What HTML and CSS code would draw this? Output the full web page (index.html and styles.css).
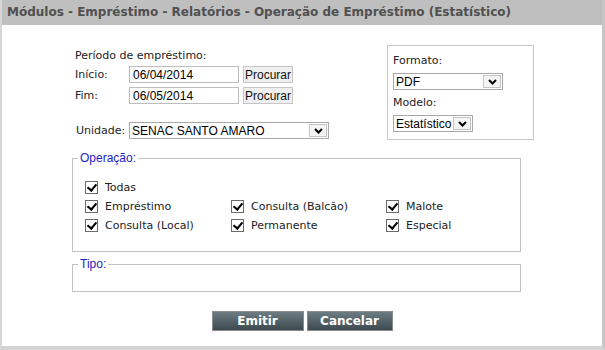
FILE: index.html
```html
<!DOCTYPE html>
<html lang="pt-BR">
  <head>
    <meta charset="UTF-8" />
    <meta name="viewport" content="width=device-width, initial-scale=1.0" />
    <title>Operação de Empréstimo (Estatístico)</title>
    <link rel="stylesheet" href="styles.css">
  </head>
  <body>
    <div class="panel">
      <div class="panel-title">
        Módulos - Empréstimo - Relatórios - Operação de Empréstimo (Estatístico)
      </div>

      <form class="report-form">
        <div class="top-row">
          <div class="period">
            <p class="caption">Período de empréstimo:</p>
            <div class="field">
              <label for="inicio">Início:</label>
              <input type="text" id="inicio" class="date" value="06/04/2014" />
              <button type="button" class="btn-search">Procurar</button>
            </div>
            <div class="field">
              <label for="fim">Fim:</label>
              <input type="text" id="fim" class="date" value="06/05/2014" />
              <button type="button" class="btn-search">Procurar</button>
            </div>
            <div class="field unit">
              <label for="unidade">Unidade:</label>
              <span class="select select-unit">
                <select id="unidade">
                  <option>SENAC SANTO AMARO</option>
                </select>
                <span class="arrow">
                  <svg width="9" height="6" viewBox="0 0 9 6"><polyline points="1,1 4.5,4.5 8,1" fill="none" stroke="#000" stroke-width="2" /></svg>
                </span>
              </span>
            </div>
          </div>

          <div class="format-box">
            <p class="caption">Formato:</p>
            <span class="select select-format">
              <select>
                <option>PDF</option>
              </select>
              <span class="arrow">
                <svg width="9" height="6" viewBox="0 0 9 6"><polyline points="1,1 4.5,4.5 8,1" fill="none" stroke="#000" stroke-width="2" /></svg>
              </span>
            </span>
            <p class="caption">Modelo:</p>
            <span class="select select-model">
              <select>
                <option>Estatístico</option>
              </select>
              <span class="arrow">
                <svg width="9" height="6" viewBox="0 0 9 6"><polyline points="1,1 4.5,4.5 8,1" fill="none" stroke="#000" stroke-width="2" /></svg>
              </span>
            </span>
          </div>
        </div>

        <fieldset class="group group-ops">
          <legend>Operação:</legend>
          <div class="checks">
            <label class="check all"><input type="checkbox" checked /> Todas</label>
            <label class="check"><input type="checkbox" checked /> Empréstimo</label>
            <label class="check"><input type="checkbox" checked /> Consulta (Balcão)</label>
            <label class="check"><input type="checkbox" checked /> Malote</label>
            <label class="check"><input type="checkbox" checked /> Consulta (Local)</label>
            <label class="check"><input type="checkbox" checked /> Permanente</label>
            <label class="check"><input type="checkbox" checked /> Especial</label>
          </div>
        </fieldset>

        <fieldset class="group group-type">
          <legend>Tipo:</legend>
        </fieldset>

        <div class="actions">
          <button type="button" class="btn btn-emit">Emitir</button>
          <button type="button" class="btn btn-cancel">Cancelar</button>
        </div>
      </form>
    </div>
  </body>
</html>
```

FILE: styles.css
```css
* {
  margin: 0;
  padding: 0;
  box-sizing: border-box;
}

body {
  font-family: "DejaVu Sans", Verdana, sans-serif;
  font-size: 11px;
  color: #222;
  background: #fff;
}

.panel {
  width: 605px;
  height: 350px;
  border-left: 2px solid #d6d6d6;
  border-right: 3px solid #c6c6c6;
  border-bottom: 4px solid #d4d4d4;
  background: #fff;
}

.panel-title {
  height: 25px;
  line-height: 25px;
  padding-left: 5px;
  background: #bfbfbf;
  color: #505050;
  font-weight: bold;
  font-size: 12px;
  white-space: nowrap;
}

/* Top area */
.top-row {
  display: flex;
  align-items: flex-start;
  padding: 20px 0 0 73px;
}

.period {
  width: 310px;
  padding-top: 4px;
}

.caption {
  line-height: 14px;
}

.period .caption {
  margin-bottom: 3px;
}

.field {
  display: flex;
  align-items: center;
  height: 17px;
  margin-bottom: 4px;
}

.field label {
  width: 54px;
}

.field.unit {
  margin-top: 18px;
}

.field.unit label {
  padding-left: 1px;
}

.date {
  width: 110px;
  height: 17px;
  border: 1px solid #bdbdbd;
  padding: 0 3px;
  font-family: "Liberation Sans", Arial, sans-serif;
  font-size: 12px;
  color: #000;
  outline: none;
}

.btn-search {
  width: 50px;
  height: 17px;
  margin-left: 4px;
  border: 1px solid #c6c6c6;
  background: #efefef;
  font-family: "Liberation Sans", Arial, sans-serif;
  font-size: 12px;
  color: #111;
  cursor: pointer;
}

/* Fake classic select */
.select {
  display: inline-flex;
  align-items: stretch;
  height: 17px;
  border: 1px solid #a9a9a9;
  background: #fff;
}

.select select {
  flex: 1;
  min-width: 0;
  appearance: none;
  border: none;
  outline: none;
  background: transparent;
  padding-left: 2px;
  font-family: "Liberation Sans", Arial, sans-serif;
  font-size: 12px;
  color: #000;
}

.select .arrow {
  display: flex;
  align-items: center;
  justify-content: center;
  width: 18px;
  margin: 1px;
  border: 1px solid #c4c4c4;
  background: #f4f4f4;
}

.select-unit {
  width: 200px;
}

.select-format {
  width: 110px;
}

.select-model {
  width: 80px;
}

.format-box {
  width: 147px;
  margin-left: 2px;
  border: 1px solid #c8c8c8;
  padding: 8px 5px 7px;
}

.format-box .caption {
  margin-bottom: 5px;
}

.format-box .select {
  display: flex;
}

.format-box .select-format {
  margin-bottom: 6px;
}

/* Groups */
.group {
  width: 449px;
  margin-left: 70px;
  border: 1px solid #c2c2c2;
}

.group legend {
  margin-left: 5px;
  padding: 0 2px;
  line-height: 14px;
  font-family: "Liberation Sans", Arial, sans-serif;
  font-size: 12px;
  color: #1c1cc4;
}

.group-ops {
  margin-top: 8px;
  padding: 13px 0 16px;
}

.checks {
  display: grid;
  grid-template-columns: 146px 155px 1fr;
  grid-auto-rows: 19px;
  padding-left: 12px;
}

.check.all {
  grid-column: 1 / 4;
}

.check {
  display: flex;
  align-items: center;
  gap: 7px;
  color: #222;
}

.check input {
  appearance: none;
  position: relative;
  width: 13px;
  height: 13px;
  border: 1px solid #6a6a6a;
  background: #fff;
}

.check input:checked::after {
  content: "";
  position: absolute;
  left: 3px;
  top: 0px;
  width: 4px;
  height: 7px;
  border-right: 2px solid #000;
  border-bottom: 2px solid #000;
  transform: rotate(40deg);
}

.group-type {
  margin-top: 5px;
  padding-bottom: 20px;
}

/* Buttons */
.actions {
  display: flex;
  justify-content: center;
  gap: 3px;
  margin-top: 19px;
}

.btn {
  height: 20px;
  border: 1px solid #8b8b8b;
  background: linear-gradient(#6c7c82, #3d4a50);
  color: #fff;
  font-family: "DejaVu Sans", Verdana, sans-serif;
  font-weight: bold;
  font-size: 12px;
  cursor: pointer;
}

.btn-emit {
  width: 92px;
}

.btn-cancel {
  width: 86px;
}
```
